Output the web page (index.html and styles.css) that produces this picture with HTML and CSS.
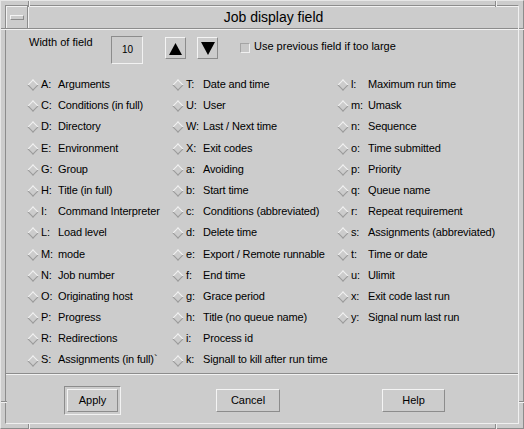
FILE: index.html
```html
<!DOCTYPE html>
<html>
<head>
<meta charset="utf-8">
<link rel="stylesheet" href="styles.css">
</head>
<body>
<div class="win">
  <span class="mark mv" style="left:27px;top:0"></span>
  <span class="mark mv" style="left:494px;top:0"></span>
  <span class="mark mv" style="left:27px;top:423px"></span>
  <span class="mark mv" style="left:494px;top:423px"></span>
  <span class="mark mh" style="left:0;top:27px"></span>
  <span class="mark mh" style="left:518px;top:27px"></span>
  <span class="mark mh" style="left:0;top:400px"></span>
  <span class="mark mh" style="left:518px;top:400px"></span>
  <div class="inner">
    <div class="titlebar">
      <div class="menubtn"><span class="menuicon"></span></div>
      <div class="title">Job display field</div>
    </div>
    <div class="content">
      <div class="toprow">
        <div class="label">Width of field</div>
        <div class="field">10</div>
        <div class="arrowbtn up">
          <svg width="13" height="12" viewBox="0 0 13 12"><polygon points="6.5,0 13,12 0,12" fill="#000"/></svg>
        </div>
        <div class="arrowbtn down">
          <svg width="14" height="13" viewBox="0 0 14 13"><polygon points="0,0 14,0 7,13" fill="#000"/></svg>
        </div>
        <div class="check"></div>
        <div class="checklabel">Use previous field if too large</div>
      </div>
      <div class="radios">
        <div class="ritem"><i class="dia"></i><span class="key">A:</span><span>Arguments</span></div>
        <div class="ritem"><i class="dia"></i><span class="key">T:</span><span>Date and time</span></div>
        <div class="ritem"><i class="dia"></i><span class="key">l:</span><span>Maximum run time</span></div>

        <div class="ritem"><i class="dia"></i><span class="key">C:</span><span>Conditions (in full)</span></div>
        <div class="ritem"><i class="dia"></i><span class="key">U:</span><span>User</span></div>
        <div class="ritem"><i class="dia"></i><span class="key">m:</span><span>Umask</span></div>

        <div class="ritem"><i class="dia"></i><span class="key">D:</span><span>Directory</span></div>
        <div class="ritem"><i class="dia"></i><span class="key">W:</span><span>Last / Next time</span></div>
        <div class="ritem"><i class="dia"></i><span class="key">n:</span><span>Sequence</span></div>

        <div class="ritem"><i class="dia"></i><span class="key">E:</span><span>Environment</span></div>
        <div class="ritem"><i class="dia"></i><span class="key">X:</span><span>Exit codes</span></div>
        <div class="ritem"><i class="dia"></i><span class="key">o:</span><span>Time submitted</span></div>

        <div class="ritem"><i class="dia"></i><span class="key">G:</span><span>Group</span></div>
        <div class="ritem"><i class="dia"></i><span class="key">a:</span><span>Avoiding</span></div>
        <div class="ritem"><i class="dia"></i><span class="key">p:</span><span>Priority</span></div>

        <div class="ritem"><i class="dia"></i><span class="key">H:</span><span>Title (in full)</span></div>
        <div class="ritem"><i class="dia"></i><span class="key">b:</span><span>Start time</span></div>
        <div class="ritem"><i class="dia"></i><span class="key">q:</span><span>Queue name</span></div>

        <div class="ritem"><i class="dia"></i><span class="key">I:</span><span>Command Interpreter</span></div>
        <div class="ritem"><i class="dia"></i><span class="key">c:</span><span>Conditions (abbreviated)</span></div>
        <div class="ritem"><i class="dia"></i><span class="key">r:</span><span>Repeat requirement</span></div>

        <div class="ritem"><i class="dia"></i><span class="key">L:</span><span>Load level</span></div>
        <div class="ritem"><i class="dia"></i><span class="key">d:</span><span>Delete time</span></div>
        <div class="ritem"><i class="dia"></i><span class="key">s:</span><span>Assignments (abbreviated)</span></div>

        <div class="ritem"><i class="dia"></i><span class="key">M:</span><span>mode</span></div>
        <div class="ritem"><i class="dia"></i><span class="key">e:</span><span>Export / Remote runnable</span></div>
        <div class="ritem"><i class="dia"></i><span class="key">t:</span><span>Time or date</span></div>

        <div class="ritem"><i class="dia"></i><span class="key">N:</span><span>Job number</span></div>
        <div class="ritem"><i class="dia"></i><span class="key">f:</span><span>End time</span></div>
        <div class="ritem"><i class="dia"></i><span class="key">u:</span><span>Ulimit</span></div>

        <div class="ritem"><i class="dia"></i><span class="key">O:</span><span>Originating host</span></div>
        <div class="ritem"><i class="dia"></i><span class="key">g:</span><span>Grace period</span></div>
        <div class="ritem"><i class="dia"></i><span class="key">x:</span><span>Exit code last run</span></div>

        <div class="ritem"><i class="dia"></i><span class="key">P:</span><span>Progress</span></div>
        <div class="ritem"><i class="dia"></i><span class="key">h:</span><span>Title (no queue name)</span></div>
        <div class="ritem"><i class="dia"></i><span class="key">y:</span><span>Signal num last run</span></div>

        <div class="ritem"><i class="dia"></i><span class="key">R:</span><span>Redirections</span></div>
        <div class="ritem"><i class="dia"></i><span class="key">i:</span><span>Process id</span></div>
        <div class="ritem empty"></div>

        <div class="ritem"><i class="dia"></i><span class="key">S:</span><span>Assignments (in full)`</span></div>
        <div class="ritem"><i class="dia"></i><span class="key">k:</span><span>Signall to kill after run time</span></div>
        <div class="ritem empty"></div>
      </div>
      <div class="sep"></div>
      <div class="buttons">
        <div class="defring"><div class="btn apply">Apply</div></div>
        <div class="btn cancel">Cancel</div>
        <div class="btn help">Help</div>
      </div>
    </div>
  </div>
</div>
</body>
</html>
```
FILE: styles.css
```css
html, body {
  margin: 0;
  padding: 0;
  background: #cccccc;
}
body {
  font-family: "Liberation Sans", Arial, sans-serif;
  font-size: 11px;
  color: #000;
}
.win {
  position: relative;
  width: 524px;
  height: 429px;
  box-sizing: border-box;
  padding: 4px;
  background: #cccccc;
  border: 1px solid;
  border-color: #e6e6e6 #8c8c8c #8c8c8c #e6e6e6;
}
.mark {
  position: absolute;
  display: block;
}
.mv {
  width: 1px;
  height: 6px;
  background: #8c8c8c;
  box-shadow: 1px 0 0 #f0f0f0;
}
.mh {
  width: 6px;
  height: 1px;
  background: #8c8c8c;
  box-shadow: 0 1px 0 #f0f0f0;
}
.inner {
  height: 100%;
  box-sizing: border-box;
  border: 1px solid;
  border-color: #8c8c8c #f0f0f0 #f0f0f0 #8c8c8c;
  display: flex;
  flex-direction: column;
}
.titlebar {
  height: 22px;
  display: flex;
  border-bottom: 1px solid #8c8c8c;
  box-shadow: inset 1px 1px 0 #f2f2f2;
}
.menubtn {
  width: 21px;
  border-right: 1px solid #8c8c8c;
  display: flex;
  align-items: center;
  justify-content: center;
}
.menuicon {
  display: block;
  width: 12px;
  height: 3px;
  border: 1px solid;
  border-color: #f4f4f4 #8c8c8c #8c8c8c #f4f4f4;
  margin-top: 1px;
}
.title {
  flex: 1;
  text-align: center;
  font-size: 14px;
  line-height: 22px;
  border-left: 1px solid #f2f2f2;
}
.content {
  flex: 1;
  display: flex;
  flex-direction: column;
  border-top: 1px solid #f2f2f2;
}
.toprow {
  display: flex;
  align-items: flex-start;
  padding: 6px 0 0 23px;
  height: 28px;
}
.label {
  width: 82px;
  line-height: 12px;
}
.field {
  width: 32px;
  height: 28px;
  box-sizing: border-box;
  border: 1px solid;
  border-color: #8c8c8c #f2f2f2 #f2f2f2 #8c8c8c;
  font-size: 10px;
  line-height: 26px;
  text-align: center;
  padding-left: 1px;
}
.arrowbtn {
  width: 21px;
  height: 22px;
  box-sizing: border-box;
  margin-top: 1px;
  border: 1px solid;
  border-color: #f4f4f4 #8c8c8c #8c8c8c #f4f4f4;
  display: flex;
  align-items: center;
  justify-content: center;
}
.arrowbtn svg { display: block; }
.up { margin-left: 22px; }
.up svg { margin-top: 1px; }
.down { margin-left: 11px; }
.check {
  width: 10px;
  height: 10px;
  box-sizing: border-box;
  margin: 7px 0 0 22px;
  border: 1px solid;
  border-color: #a4a4a4 #f0f0f0 #f0f0f0 #a4a4a4;
  background: #c8c8c8;
}
.checklabel {
  margin: 4px 0 0 4px;
  line-height: 12px;
}
.radios {
  display: grid;
  grid-template-columns: 145px 165px auto;
  grid-auto-rows: 21.2px;
  padding-left: 21px;
  margin-top: 10px;
  letter-spacing: -0.15px;
}
.ritem {
  display: flex;
  align-items: center;
  line-height: 21.2px;
  white-space: nowrap;
}
.dia {
  display: block;
  width: 8px;
  height: 8px;
  margin: 1px 4px 0 2px;
  transform: rotate(45deg);
  box-sizing: border-box;
  border: 1px solid;
  border-color: #f2f2f2 #9a9a9a #9a9a9a #f2f2f2;
  background: #cccccc;
}
.key {
  width: 17px;
  flex: none;
}
.sep {
  margin-top: 2px;
  height: 1px;
  background: #8c8c8c;
  border-bottom: 1px solid #f2f2f2;
}
.buttons {
  display: flex;
  align-items: flex-start;
  padding: 11px 0 0 58px;
}
.defring {
  width: 57px;
  height: 29px;
  box-sizing: border-box;
  border: 1px solid;
  border-color: #8c8c8c #f2f2f2 #f2f2f2 #8c8c8c;
  padding: 2px;
}
.btn {
  height: 23px;
  box-sizing: border-box;
  border: 1px solid;
  border-color: #f4f4f4 #8c8c8c #8c8c8c #f4f4f4;
  text-align: center;
  line-height: 21px;
}
.apply { width: 51px; }
.cancel { width: 64px; margin: 3px 0 0 95px; }
.help { width: 63px; margin: 3px 0 0 102px; }
```
